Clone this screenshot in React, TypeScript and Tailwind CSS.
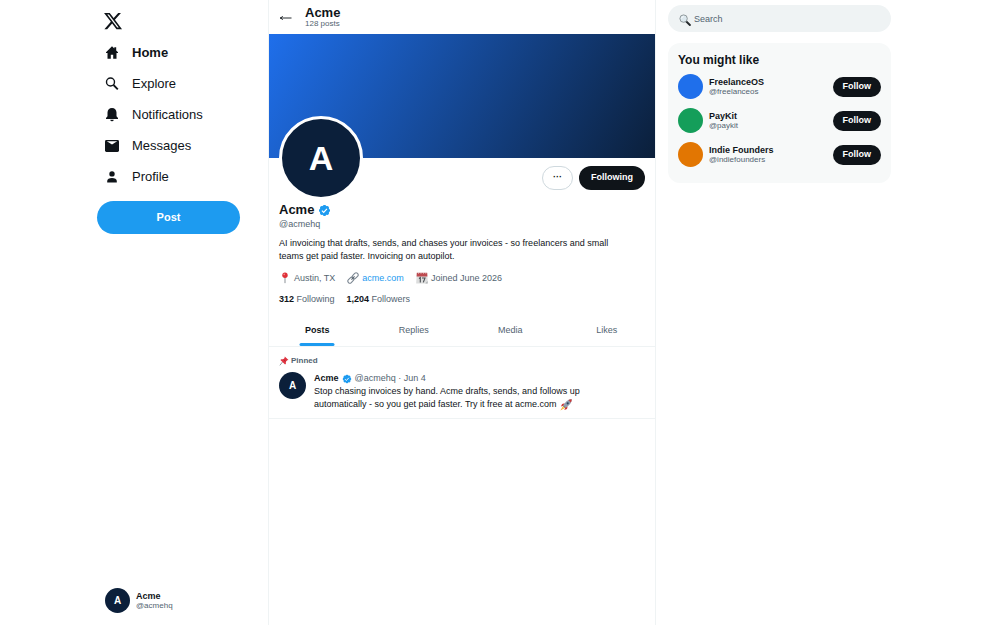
import React, { useState } from "react"

const SANS = "font-['Liberation_Sans',Arial,sans-serif]"

type Suggestion = { name: string; handle: string; color: string }

const suggestions: Suggestion[] = [
  { name: "FreelanceOS", handle: "@freelanceos", color: "bg-[#1f6feb]" },
  { name: "PayKit", handle: "@paykit", color: "bg-[#149e5a]" },
  { name: "Indie Founders", handle: "@indiefounders", color: "bg-[#e27602]" },
]

const tabs = ["Posts", "Replies", "Media", "Likes"]

const XLogo = () => (
  <svg viewBox="0 0 24 24" className="size-5" fill="#0f1419" aria-hidden="true">
    <path d="M18.244 2.25h3.308l-7.227 8.26 8.502 11.24H16.17l-5.214-6.817L4.99 21.75H1.68l7.73-8.835L1.254 2.25H8.08l4.713 6.231zm-1.161 17.52h1.833L7.084 4.126H5.117z" />
  </svg>
)

const HomeIcon = () => (
  <svg viewBox="0 0 16 16" className="size-4" fill="currentColor" aria-hidden="true">
    <path d="M8 1.300 2 7.200v.700h1.500v5.800h3.300V9.700h2.400v4h3.300V7.900H14v-.700l-1.800-1.800V2.200h-1.900v1.400z" />
  </svg>
)

const ExploreIcon = () => (
  <svg viewBox="0 0 16 16" className="size-4" fill="none" stroke="currentColor" aria-hidden="true">
    <circle cx="6.500" cy="6" r="4" strokeWidth="1.400" />
    <path d="m9.500 9 4.300 4.300" strokeWidth="1.800" />
  </svg>
)

const BellIcon = () => (
  <svg viewBox="0 0 16 16" className="size-4" fill="currentColor" aria-hidden="true">
    <path d="M8 1C5.300 1 3.500 3 3.500 5.600v3.600L2 11v1h12v-1l-1.500-1.800V5.600C12.500 3 10.700 1 8 1zM6.300 12.700a1.700 1.500 0 0 0 3.400 0z" />
  </svg>
)

const MailIcon = () => (
  <svg viewBox="0 0 16 16" className="size-4" fill="currentColor" aria-hidden="true">
    <rect x="1" y="2" width="14" height="12" rx="1.400" />
    <path d="M2.800 3.200h10.400L8 6.600z" fill="#fff" />
  </svg>
)

const PersonIcon = () => (
  <svg viewBox="0 0 16 16" className="size-4" fill="currentColor" aria-hidden="true">
    <circle cx="8" cy="4.900" r="2.700" />
    <path d="M3.200 13.600v-1.500c0-2.200 2.100-3.200 4.800-3.200s4.800 1 4.800 3.200v1.500z" />
  </svg>
)

const navItems = [
  { label: "Home", icon: <HomeIcon /> },
  { label: "Explore", icon: <ExploreIcon /> },
  { label: "Notifications", icon: <BellIcon /> },
  { label: "Messages", icon: <MailIcon /> },
  { label: "Profile", icon: <PersonIcon /> },
]

const Verified = ({ className }: { className: string }) => (
  <svg viewBox="0 0 22 22" className={className} role="img" aria-label="Verified">
    <path
      fill="#1d9bf0"
      d="M20.396 11c-.018-.646-.215-1.275-.57-1.816-.354-.54-.852-.972-1.438-1.246.223-.607.27-1.264.14-1.897-.131-.634-.437-1.218-.882-1.687-.47-.445-1.053-.75-1.687-.882-.633-.13-1.290-.083-1.897.14-.273-.587-.704-1.086-1.245-1.440S11.647 1.620 11 1.604c-.646.017-1.273.213-1.813.568s-.969.854-1.240 1.440c-.608-.223-1.267-.272-1.902-.14-.635.130-1.220.436-1.690.882-.445.470-.749 1.055-.878 1.688-.130.633-.080 1.290.144 1.896-.587.274-1.087.705-1.443 1.245-.356.540-.555 1.170-.574 1.817.020.647.218 1.276.574 1.817.356.540.856.972 1.443 1.245-.224.606-.274 1.263-.144 1.896.130.634.433 1.218.877 1.688.470.443 1.054.747 1.687.878.633.132 1.290.084 1.897-.136.274.586.705 1.084 1.246 1.439.540.354 1.170.551 1.816.569.647-.016 1.276-.213 1.817-.567s.972-.854 1.245-1.440c.604.239 1.266.296 1.903.164.636-.132 1.220-.447 1.680-.907.460-.460.776-1.044.908-1.681s.075-1.299-.165-1.903c.586-.274 1.084-.705 1.439-1.246.354-.540.551-1.170.569-1.816z"
    />
    <path d="m6.600 11.300 3 3 5.500-6" fill="none" stroke="#fff" strokeWidth="2" />
  </svg>
)

const MapPin = () => (
  <svg viewBox="0 0 12 12" className="size-3" aria-hidden="true">
    <path d="M5.500 5h1v5.500l-.5 1-.5-1z" fill="#8b9298" />
    <circle cx="6" cy="3.300" r="2.700" fill="#df3038" />
    <circle cx="5.200" cy="2.400" r=".8" fill="#f58b8d" />
  </svg>
)

const LinkIcon = () => (
  <svg viewBox="0 0 12 12" className="size-3" fill="none" aria-hidden="true">
    <g transform="rotate(-45 6 6)" stroke="#7c8792" strokeWidth="1.100">
      <rect x="-.4" y="4" width="6.600" height="4" rx="2" />
      <rect x="5.800" y="4" width="6.600" height="4" rx="2" />
      <path d="M3.800 6h4.400" stroke="#59636d" />
    </g>
  </svg>
)

const CalendarIcon = () => (
  <svg viewBox="0 0 12 12" className="size-3" aria-hidden="true">
    <path d="M.8 1h10.400l.6 10.500H.2z" fill="#dcdddd" />
    <path d="M.8.800h10.400l.2 3.600H.6z" fill="#bd4a50" />
    <path d="M2.500.500v1.200M5 .500v1.200M7.500.500v1.200M9.800.500v1.200" stroke="#eee" strokeWidth=".7" />
    <path d="M3 6.500 4.300 5.600v4.800M6 6h3L7.300 10.400" fill="none" stroke="#4b4f53" strokeWidth="1.100" />
    <path d="M9.300 11.500 11.600 9v2.500z" fill="#adb0b2" />
  </svg>
)

const Pushpin = () => (
  <svg viewBox="0 0 12 12" className="size-2.5" aria-hidden="true">
    <path d="M4.200 7.200 1 11.200" stroke="#7e8990" strokeWidth="1" />
    <path d="m6.900.600 4.500 4.300-1.500.3-1.700 1.600.1 2.400-1 .9L1.700 4.800l1-.9 2.500.1 1.500-1.700z" fill="#df3340" />
    <path d="m5.500 4.200 2.400 2.300" stroke="#9c1b29" strokeWidth=".8" />
  </svg>
)

const Rocket = () => (
  <svg viewBox="0 0 12 12" className="size-3" role="img" aria-label="Rocket">
    <path d="M3.200 7 .4 11.500 5 8.800z" fill="#f6a21b" />
    <path d="M3.600 7.600 1.800 10.200 4.400 8.500z" fill="#fde26b" />
    <path d="M4.800 4.300 2.100 5 .9 7.600l2.600-.8zM7.700 7.200 7 9.900l-2.600 1.200.8-2.600z" fill="#d63a38" />
    <path d="M11.700.300C8.500.300 6 2 3.100 6.600l2.300 2.300C10 6 11.700 3.500 11.700.300z" fill="#929eae" />
    <path d="M11.700.300c-1.200 0-2.300.3-3.300.8l2.500 2.500c.5-1 .8-2.100.8-3.300z" fill="#c93a3a" />
    <circle cx="7.700" cy="4.300" r="1.100" fill="#28445f" />
    <path d="m3.100 6.600 2.300 2.300" stroke="#4b535e" strokeWidth=".8" />
  </svg>
)

const Magnifier = () => (
  <svg viewBox="0 0 12 12" className="size-3 shrink-0" aria-hidden="true">
    <path d="m7.300 7.500 3.600 3.500" stroke="#25292c" strokeWidth="1.900" strokeLinecap="round" />
    <circle cx="4.600" cy="4.600" r="3.700" fill="#dce8ee" stroke="#7c8588" strokeWidth=".8" />
    <path d="M2.500 4.500a2.200 2.200 0 0 1 2.100-2" fill="none" stroke="#fff" strokeWidth=".8" />
  </svg>
)

const Sidebar = () => (
  <header className="sticky top-0 flex h-screen w-[180px] shrink-0 flex-col border-r border-[#eff3f4] pr-7 pl-2">
    <a href="#" aria-label="X" className="mt-[11px] mb-[6px] ml-[6px] w-5">
      <XLogo />
    </a>
    <nav className="flex flex-col">
      {navItems.map((item) => (
        <a
          key={item.label}
          href="#"
          className={
            item.label === "Home"
              ? "flex h-[31px] items-center gap-3 pl-[7px] text-[13px] font-bold"
              : "flex h-[31px] items-center gap-3 pl-[7px] text-[13px]"
          }
        >
          {item.icon}
          {item.label}
        </a>
      ))}
    </nav>
    <button type="button" className="mt-[9px] h-[33px] rounded-full bg-[#1d9bf0] text-[11px] font-bold text-white">
      Post
    </button>
    <div className="mt-auto mb-3 flex items-center gap-1.5 pl-2">
      <div className="flex size-[25px] items-center justify-center rounded-full bg-[#0b1f3a] text-[10px] font-bold text-white">
        A
      </div>
      <div className="leading-[10px]">
        <div className="text-[9px] font-bold">Acme</div>
        <div className="text-[8px] text-[#536471]">@acmehq</div>
      </div>
    </div>
  </header>
)

const Profile = () => {
  const [activeTab, setActiveTab] = useState("Posts")

  return (
    <main className="min-w-0 flex-1 border-r border-[#eff3f4]">
      <div className="flex h-[34px] items-center gap-3 px-2.5">
        <button type="button" aria-label="Back" className="flex w-[14px] items-center">
          <svg viewBox="0 0 14 10" className="h-[10px] w-[14px]" fill="none" stroke="#0f1419" aria-hidden="true">
            <path d="M12.500 6H1.500" strokeWidth=".9" />
            <path d="M3.600 4.200Q3 5.500 1.200 6 3 6.500 3.600 7.800" />
          </svg>
        </button>
        <div>
          <h1 className="text-[13px] leading-[13px] font-bold">Acme</h1>
          <p className="text-[8px] leading-[9px] text-[#536471]">128 posts</p>
        </div>
      </div>

      <div className="h-[124px] bg-[linear-gradient(120deg,#1f6feb,#0b1f3a)]" />

      <section className="px-2.5 pb-2">
        <div className="flex items-start justify-between">
          <div className="-mt-[42px] flex size-[84px] items-center justify-center rounded-full border-3 border-white bg-[#0b1f3a] text-[34px] font-bold text-white">
            A
          </div>
          <div className="mt-2 flex gap-1.5">
            <button
              type="button"
              aria-label="More"
              className="h-6 w-[31px] rounded-full border border-[#cfd9de] text-[9px] font-bold"
            >
              ···
            </button>
            <button type="button" className="h-6 rounded-full bg-[#0f1419] px-3 text-[9px] font-bold text-white">
              Following
            </button>
          </div>
        </div>

        <h2 className="mt-[2px] flex items-center gap-1 text-[13px] leading-4 font-bold">
          Acme <Verified className="size-[13px]" />
        </h2>
        <p className="text-[9px] leading-3 text-[#536471]">@acmehq</p>
        <p className="mt-[7px] text-[9px] leading-[13px]">
          AI invoicing that drafts, sends, and chases your invoices - so freelancers and small
          <br />
          teams get paid faster. Invoicing on autopilot.
        </p>
        <div className="mt-[9px] flex gap-3 text-[9px] leading-3 text-[#536471]">
          <span className="flex items-center gap-[3px]">
            <MapPin /> Austin, TX
          </span>
          <span className="flex items-center gap-[3px]">
            <LinkIcon />
            <a href="#" className="text-[#1d9bf0]">
              acme.com
            </a>
          </span>
          <span className="flex items-center gap-[3px]">
            <CalendarIcon /> Joined June 2026
          </span>
        </div>
        <div className="mt-[9px] flex gap-3 text-[9px] leading-3 text-[#536471]">
          <a href="#">
            <b className="text-[#0f1419]">312</b> Following
          </a>
          <a href="#">
            <b className="text-[#0f1419]">1,204</b> Followers
          </a>
        </div>
      </section>

      <div className="flex border-b border-[#eff3f4]" role="tablist">
        {tabs.map((tab) => (
          <button
            key={tab}
            type="button"
            role="tab"
            aria-selected={activeTab === tab}
            onClick={() => setActiveTab(tab)}
            className={
              activeTab === tab
                ? "relative h-[33px] flex-1 pt-[3px] text-[9px] font-bold"
                : "relative h-[33px] flex-1 pt-[3px] text-[9px] text-[#536471]"
            }
          >
            {tab}
            {activeTab === tab && (
              <span className="absolute bottom-0 left-1/2 h-[3px] w-[35px] -translate-x-1/2 rounded-full bg-[#1d9bf0]" />
            )}
          </button>
        ))}
      </div>

      <article className="border-b border-[#eff3f4] px-2.5 pt-2 pb-[7px]">
        <div className="flex items-center gap-[2px] text-[8px] leading-3 font-bold text-[#536471]">
          <Pushpin /> Pinned
        </div>
        <div className="mt-[5px] flex gap-2">
          <div className="flex size-[27px] shrink-0 items-center justify-center rounded-full bg-[#0b1f3a] text-[10px] font-bold text-white">
            A
          </div>
          <div className="text-[9px] leading-[13px]">
            <div className="flex items-center gap-[3px]">
              <b>Acme</b>
              <Verified className="size-[10px]" />
              <span className="text-[#536471]">@acmehq · Jun 4</span>
            </div>
            <p>Stop chasing invoices by hand. Acme drafts, sends, and follows up</p>
            <p className="flex items-center gap-[3px]">
              automatically - so you get paid faster. Try it free at acme.com <Rocket />
            </p>
          </div>
        </div>
      </article>
    </main>
  )
}

const RightColumn = () => (
  <aside className="w-[255px] shrink-0 pt-[5px] pr-5 pl-3">
    <label className="flex h-[27px] items-center gap-[3px] rounded-full bg-[#eff3f4] px-[11px] pt-[2px]">
      <Magnifier />
      <input
        type="search"
        aria-label="Search"
        placeholder="Search"
        className="min-w-0 flex-1 bg-transparent text-[9px] outline-none placeholder:text-[#536471]"
      />
    </label>
    <section className="mt-[11px] rounded-xl bg-[#f7f9f9] px-2.5 pt-[9px] pb-4">
      <h2 className="text-[12px] leading-4 font-bold">You might like</h2>
      <ul className="mt-[6px] flex flex-col gap-[9px]">
        {suggestions.map((s) => (
          <li key={s.handle} className="flex items-center gap-1.5">
            <div className={`size-[25px] rounded-full ${s.color}`} />
            <div className="leading-[10px]">
              <div className="text-[9px] font-bold">{s.name}</div>
              <div className="text-[8px] text-[#536471]">{s.handle}</div>
            </div>
            <button
              type="button"
              className="ml-auto h-5 rounded-full bg-[#0f1419] px-2.5 text-[9px] font-bold text-white"
            >
              Follow
            </button>
          </li>
        ))}
      </ul>
    </section>
  </aside>
)

const App = () => (
  <div className={`min-h-screen bg-white text-[#0f1419] ${SANS}`}>
    <div className="mx-auto flex max-w-[822px]">
      <Sidebar />
      <Profile />
      <RightColumn />
    </div>
  </div>
)

export default App
